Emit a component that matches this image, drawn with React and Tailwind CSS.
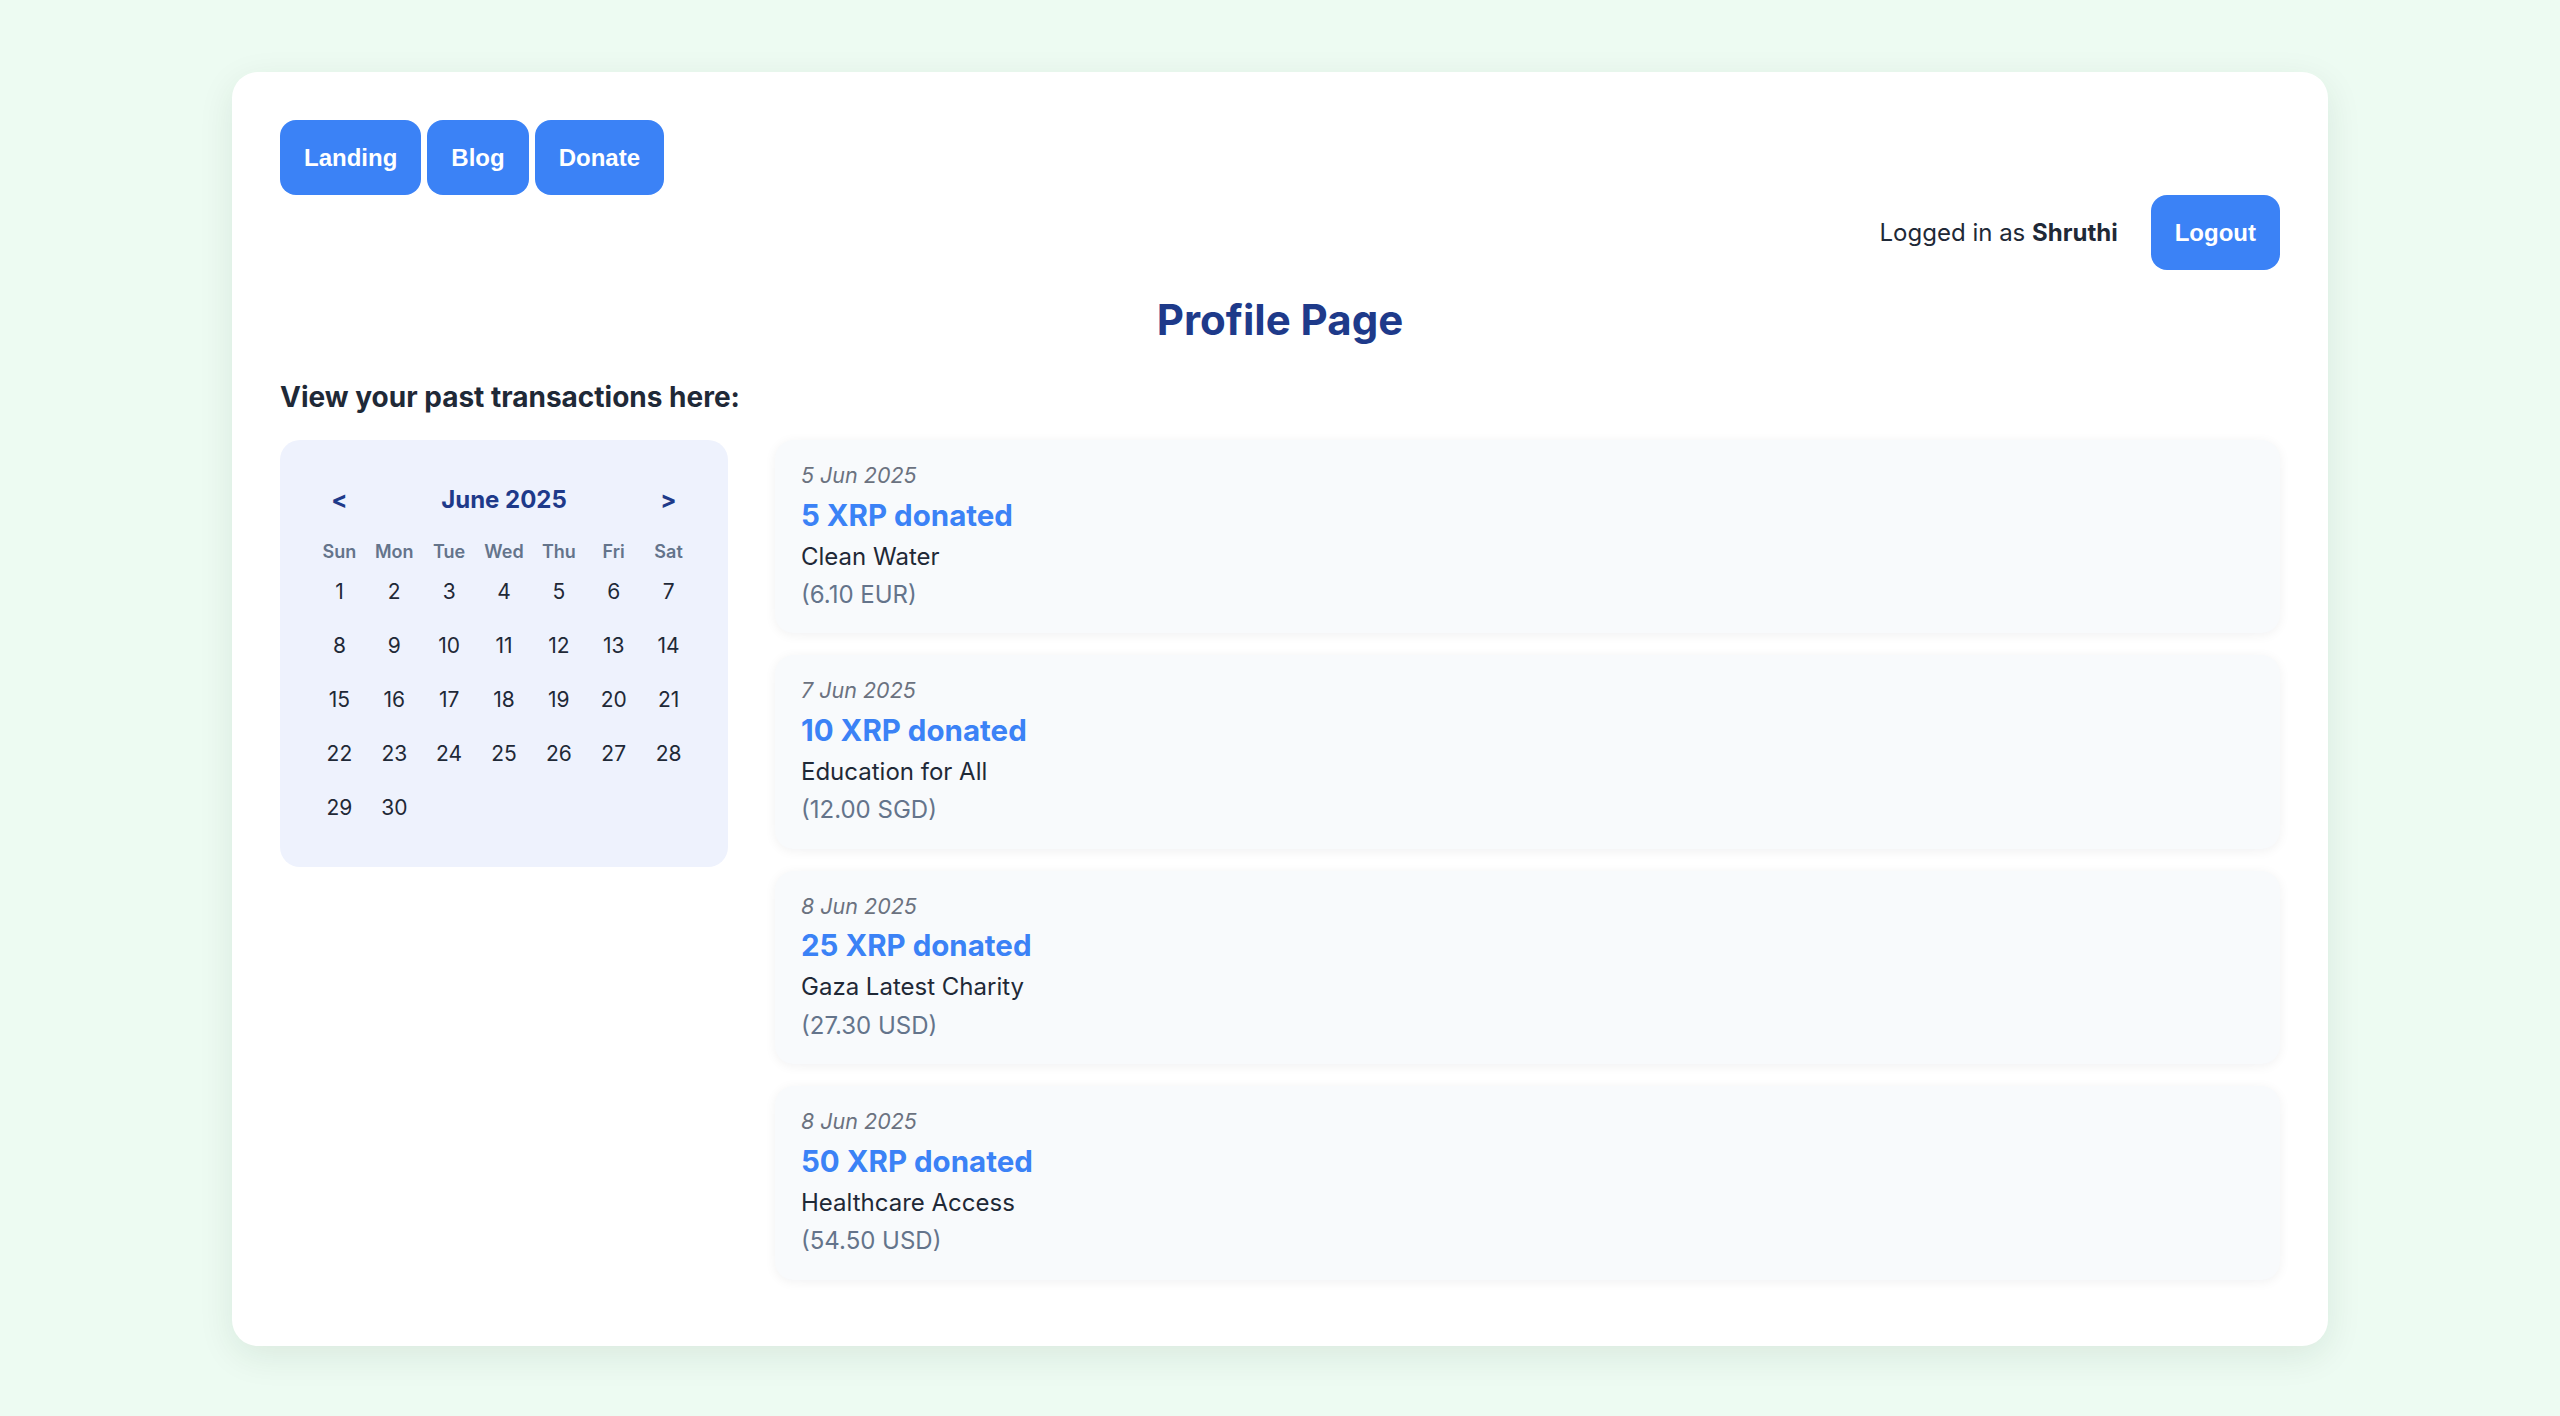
import React from 'react';

// Donation history shown on the profile page
const transactions = [
  { date: '5 Jun 2025', xrp: 5, cause: 'Clean Water', fiat: '6.10 EUR' },
  { date: '7 Jun 2025', xrp: 10, cause: 'Education for All', fiat: '12.00 SGD' },
  { date: '8 Jun 2025', xrp: 25, cause: 'Gaza Latest Charity', fiat: '27.30 USD' },
  { date: '8 Jun 2025', xrp: 50, cause: 'Healthcare Access', fiat: '54.50 USD' },
];

const weekDays = ['Sun', 'Mon', 'Tue', 'Wed', 'Thu', 'Fri', 'Sat'];

// June 2025 starts on a Sunday, 30 days
const days = Array.from({ length: 30 }, (_, i) => i + 1);

const NavButton = ({ children }) => (
  <button className="h-[75px] px-[24px] rounded-[16px] bg-[#3b82f6] text-white font-bold text-[24px] font-['Liberation_Sans',Arial,sans-serif]">
    {children}
  </button>
);

const Calendar = () => (
  <div className="w-[448px] shrink-0 rounded-[20px] bg-[#eef2fd] p-[32px]">
    <div className="flex h-[55px] items-center justify-between text-[#1e3a8a] font-bold text-[24px]">
      <button className="w-[55px] text-center">&lt;</button>
      <span>June 2025</span>
      <button className="w-[55px] text-center">&gt;</button>
    </div>
    <div className="mt-[10px] grid grid-cols-7 h-[28px] items-center">
      {weekDays.map(d => (
        <div key={d} className="text-center text-[18px] font-semibold text-[#64748b]">
          {d}
        </div>
      ))}
    </div>
    <div className="grid grid-cols-7">
      {days.map(d => (
        <div key={d} className="flex h-[54px] items-center justify-center text-[21px] text-[#1f2937]">
          {d}
        </div>
      ))}
    </div>
  </div>
);

const TransactionCard = ({ tx }) => (
  <div className="rounded-[19px] bg-[#f8fafc] px-[26px] py-[19px] shadow-[0_2px_12px_rgba(15,23,42,0.06)]">
    <div className="italic text-[21.5px] leading-[33.6px] text-[#6b7280]">{tx.date}</div>
    <div className="font-bold text-[29.5px] leading-[45px] text-[#3b82f6]">{tx.xrp} XRP donated</div>
    <div className="text-[24px] leading-[38.4px] text-[#1f2937]">{tx.cause}</div>
    <div className="text-[24px] leading-[38.4px] text-[#64748b]">({tx.fiat})</div>
  </div>
);

export default function App() {
  return (
    <div className="min-h-screen bg-[#edfbf2] pt-[72px] pb-[70px] font-['Inter',sans-serif]">
      <div className="mx-auto w-[2096px] rounded-[26px] bg-white px-[48px] pt-[48px] pb-[66px] shadow-[0_10px_36px_rgba(20,60,35,0.09)]">
        <nav className="flex gap-[6px]">
          <NavButton>Landing</NavButton>
          <NavButton>Blog</NavButton>
          <NavButton>Donate</NavButton>
        </nav>

        <div className="flex items-center justify-end">
          <span className="mr-[33px] text-[24px] text-[#1f2937]">
            Logged in as <strong className="font-bold">Shruthi</strong>
          </span>
          <NavButton>Logout</NavButton>
        </div>

        <h2 className="mt-[25px] text-center font-bold text-[42px] leading-[50px] text-[#1e3a8a]">
          Profile Page
        </h2>

        <h3 className="mt-[32px] font-bold text-[28px] leading-[40px] text-[#1f2937]">
          View your past transactions here:
        </h3>

        <div className="mt-[23px] flex items-start gap-[47px]">
          <Calendar />
          <div className="flex flex-1 flex-col gap-[22px]">
            {transactions.map((tx, i) => (
              <TransactionCard key={i} tx={tx} />
            ))}
          </div>
        </div>
      </div>
    </div>
  );
}
